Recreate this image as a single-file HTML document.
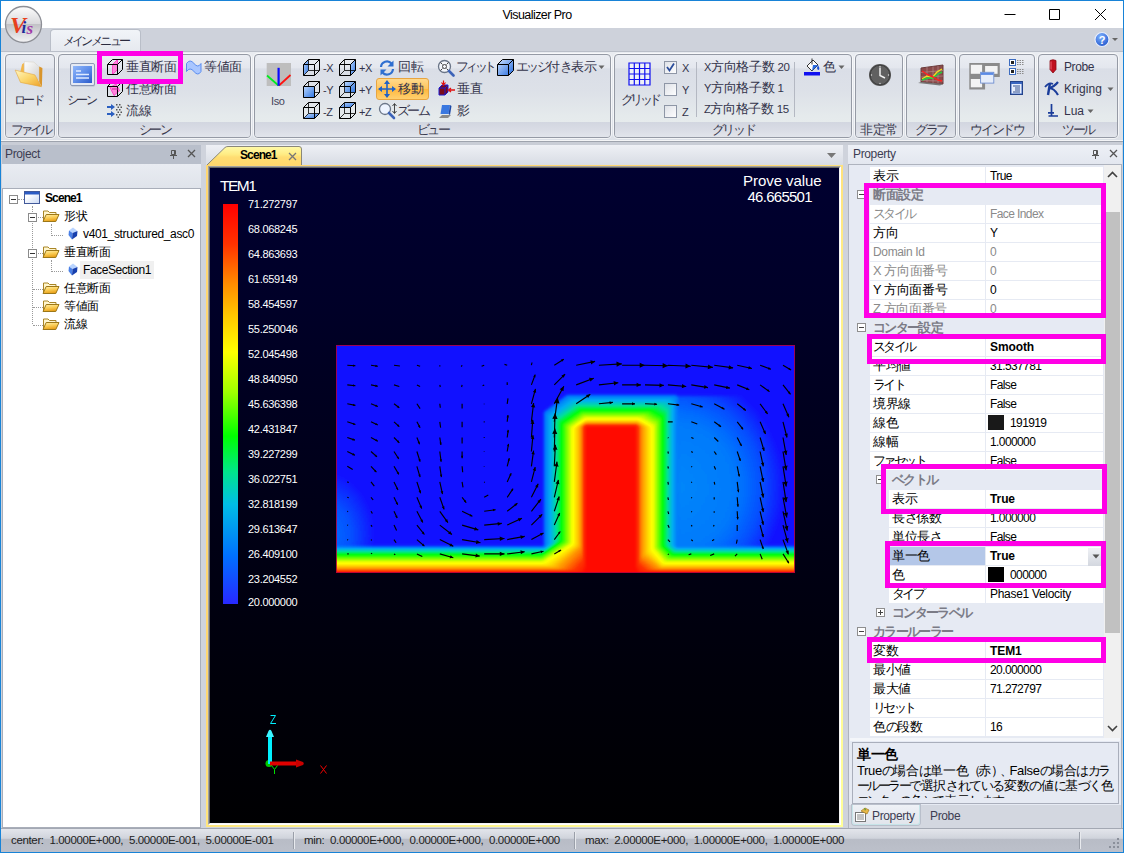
<!DOCTYPE html>
<html lang="ja">
<head>
<meta charset="utf-8">
<title>Visualizer Pro</title>
<style>
*{box-sizing:border-box;margin:0;padding:0}
html,body{width:1124px;height:853px;overflow:hidden;background:#fff}
body{font-family:"Liberation Sans",sans-serif;font-size:12px;color:#1e1e1e;position:relative;letter-spacing:-0.35px}
.abs{position:absolute}
#win{position:absolute;left:0;top:0;width:1124px;height:853px;background:#fff;overflow:hidden}
#winb{position:absolute;left:0;top:0;width:1124px;height:853px;border:1px solid #1883d7;z-index:99}
#title{position:absolute;left:0;top:0;width:1122px;height:28px;background:#fff}
#title .cap{position:absolute;left:0;width:1072px;top:7px;text-align:center;font-size:12.5px;color:#000;letter-spacing:-0.55px}
#tabband{position:absolute;left:0;top:28px;width:1122px;height:23px;background:#ced2db}
#maintab{position:absolute;left:49px;top:1px;width:91px;height:22px;background:linear-gradient(#f1f4f8,#e6e9ef);border:1px solid #b9bec8;border-bottom:none;border-radius:4px 4px 0 0;text-align:center;line-height:22px;font-size:12px;color:#2b2b3f}
#ribbon{position:absolute;left:0;top:51px;width:1122px;height:90px;background:linear-gradient(#e9ecf1,#dde1e8);border-top:1px solid #b9bec8;border-bottom:1px solid #f4f5f7}
.grp{position:absolute;top:3px;height:84px;border:1px solid #959aa5;border-radius:4px;background:linear-gradient(#eaedf3 0,#e4e7ee 15.5%,#dadee7 17%,#dde1e8 45%,#e5eaec 75%,#e9eeee 100%);overflow:hidden;box-shadow:0 0 0 1px rgba(255,255,255,.65)}
.grp .lbl{position:absolute;left:0;right:0;bottom:0;height:15px;background:linear-gradient(#d2d6e0,#d9dce5 50%,#e2e5eb);text-align:center;font-size:12.5px;line-height:17px;color:#3a3a4e}
.rt{position:absolute;font-size:12px;color:#33334a;white-space:nowrap;line-height:14px}
.sm{font-size:11px}
.k{letter-spacing:-2.6px}
.h{letter-spacing:-1.4px}
.p{letter-spacing:-3.5px}
.c .k{letter-spacing:-1.7px}
.lbl .k{letter-spacing:-2.4px}
.lbl.f .k{letter-spacing:-3.3px}
.kk .k{letter-spacing:-3.6px}
#gap1{position:absolute;left:0;top:141px;width:1122px;height:4px;background:#c9cdd6;border-top:1px solid #9ea3ad}
#work{position:absolute;left:0;top:145px;width:1122px;height:686px;background:#cfd3dc}
.mg{position:absolute;border:5px solid #ff00e6;z-index:50}
#status{position:absolute;left:0;top:828px;width:1122px;height:24px;background:linear-gradient(#e3e5eb 0,#d0d4dc 40%,#b8bcc6 46%,#bcc0ca 100%);border-top:1px solid #a3a8b3;font-size:11.5px;color:#222;line-height:22px}
#status span{position:absolute;top:0;white-space:pre}
.sep{position:absolute;top:3px;width:1px;height:17px;background:#9a9fa9;border-right:1px solid #e8eaee;width:2px}
</style>
</head>
<body>
<div id="win">
<div id="winb"></div>
<div id="title" style="left:1px;top:1px"><div class="cap">Visualizer Pro</div>
<svg class="abs" style="left:985px;top:0" width="138" height="28" viewBox="0 0 138 28"><path d="M18.5 13.5h11M63.5 8.5h10v10h-10zM109 8l11 11M120 8l-11 11" stroke="#000" stroke-width="1" fill="none"/></svg>
</div>
<div id="tabband" style="left:1px"><div id="maintab"><span class="k">メインメニュー</span></div>
<svg class="abs" style="left:1092px;top:2px" width="30" height="20" viewBox="0 0 30 20"><defs><radialGradient id="hg" cx="0.4" cy="0.3" r="0.8"><stop offset="0" stop-color="#7fb2ff"/><stop offset="1" stop-color="#1a4fc8"/></radialGradient></defs><circle cx="9" cy="9.5" r="7" fill="url(#hg)" stroke="#e8eefc" stroke-width="1.2"/><text x="9" y="14" font-family="Liberation Sans" font-weight="bold" font-size="11" fill="#fff" text-anchor="middle">?</text><path d="M19 8h6l-3 3z" fill="#666"/></svg>
</div>
<!-- app orb -->
<svg class="abs" style="left:3px;top:4px;z-index:5" width="42" height="42" viewBox="0 0 42 42"><defs><linearGradient id="og" x1="0" y1="0" x2="0" y2="1"><stop offset="0" stop-color="#fdfdfd"/><stop offset="0.48" stop-color="#d9d9dc"/><stop offset="0.5" stop-color="#c2c2c6"/><stop offset="1" stop-color="#f4f4f6"/></linearGradient></defs><circle cx="20.5" cy="20.5" r="18" fill="url(#og)" stroke="#8d8f96" stroke-width="1.3"/><text x="7" y="29" font-family="Liberation Serif" font-style="italic" font-weight="bold" font-size="24" fill="#e8401c">V</text><text x="18.5" y="29" font-family="Liberation Serif" font-style="italic" font-weight="bold" font-size="17" fill="#1a2a9a">i</text><text x="23.5" y="30" font-family="Liberation Serif" font-style="italic" font-weight="bold" font-size="17" fill="#a038a8">s</text></svg>
<div id="ribbon" style="left:1px">
</div>
<!-- groups (image coords) -->
<div class="grp" style="left:5px;top:54px;width:50px"><div class="lbl f"><span class="k">ファイル</span></div></div>
<div class="grp" style="left:58px;top:54px;width:193px"><div class="lbl"><span class="k">シーン</span></div></div>
<div class="grp" style="left:254px;top:54px;width:357px"><div class="lbl"><span class="k">ビュー</span></div></div>
<div class="grp" style="left:614px;top:54px;width:238px"><div class="lbl"><span class="k">グリッド</span></div></div>
<div class="grp" style="left:855px;top:54px;width:48px"><div class="lbl">非定常</div></div>
<div class="grp" style="left:906px;top:54px;width:50px"><div class="lbl"><span class="k">グラフ</span></div></div>
<div class="grp" style="left:959px;top:54px;width:76px"><div class="lbl"><span class="k">ウインドウ</span></div></div>
<div class="grp" style="left:1038px;top:54px;width:80px"><div class="lbl"><span class="k">ツール</span></div></div>
<div id="ribitems">
<!-- file -->
<svg class="abs" style="left:14px;top:58px" width="34" height="32" viewBox="0 0 34 32"><defs><linearGradient id="lf1" x1="0" y1="0" x2="1" y2="1"><stop offset="0" stop-color="#fff6c0"/><stop offset="0.5" stop-color="#fbd56a"/><stop offset="1" stop-color="#eda02a"/></linearGradient><linearGradient id="lf2" x1="0" y1="0" x2="1" y2="1"><stop offset="0" stop-color="#ffffff"/><stop offset="1" stop-color="#cfcfcf"/></linearGradient></defs><path d="M8.100 6.300L10.300 4.700 10.300 19.600 6 15.300z" fill="#f2b64a"/><path d="M10.300 3.600L19.900 4.100 25.200 8.900 25.200 21.700 10.300 19.600z" fill="url(#lf2)" stroke="#d8d4c8" stroke-width=".6"/><path d="M25.200 8.400L28.400 10 27.900 28.700 25.200 24z" fill="#d9952c"/><path d="M1.200 12.100L20.900 16.900 27.400 28.700 6.500 24.400z" fill="url(#lf1)" stroke="#e2a43a" stroke-width=".6"/></svg>
<div class="rt" style="left:14px;top:93px"><span class="k">ロード</span></div>
<!-- scene -->
<svg class="abs" style="left:70px;top:63px" width="27" height="27" viewBox="0 0 27 27"><defs><linearGradient id="sc1" x1="0" y1="0" x2="1" y2="1"><stop offset="0" stop-color="#8fb6fa"/><stop offset="0.5" stop-color="#5f8eea"/><stop offset="1" stop-color="#2a58c8"/></linearGradient></defs><rect x="1" y="1.500" width="24" height="22" rx="1.500" fill="#8a97b0" opacity=".5"/><rect x="0.500" y="0.500" width="24" height="22" rx="1.500" fill="#e4e9f4" stroke="#8e9ab4"/><rect x="3" y="3" width="19" height="17" fill="url(#sc1)"/><path d="M6 8h5M6 11.500h13M6 15h13" stroke="#dfeaff" stroke-width="1.600"/></svg>
<div class="rt" style="left:67px;top:93px"><span class="k">シーン</span></div>
<svg class="abs" style="left:106px;top:58px" width="18" height="18" viewBox="0 0 18 18"><path d="M6.500 16.500v-10l5-5v10z" fill="#ff86dc" stroke="#ff30c4" stroke-width=".8"/><path d="M1.500 6.500h10v10h-10zM1.500 6.500l5-5h10l-5 5M16.500 1.500v10l-5 5" stroke="#000" fill="none"/></svg>
<div class="rt" style="left:126px;top:60px;font-size:13px">垂直断面</div>
<svg class="abs" style="left:185px;top:59px" width="18" height="16" viewBox="0 0 18 16"><path d="M1.500 4.500q3.500-5 7.500 0t7 0v8q-3 5-7 0t-7.500 0z" fill="#a9c6ff" stroke="#5b8df0"/></svg>
<div class="rt" style="left:204px;top:60px;font-size:13px">等値面</div>
<svg class="abs" style="left:106px;top:80px" width="18" height="18" viewBox="0 0 18 18"><path d="M4 7.500l6-3.500 3.500 6.500-5.500 5z" fill="#ff86dc" stroke="#ff30c4" stroke-width=".8"/><path d="M1.500 6.500h10v10h-10zM1.500 6.500l5-5h10l-5 5M16.500 1.500v10l-5 5" stroke="#000" fill="none"/><path d="M6 9h6" stroke="#d020a0"/></svg>
<div class="rt" style="left:126px;top:82px;font-size:13px">任意断面</div>
<svg class="abs" style="left:106px;top:103px" width="18" height="16" viewBox="0 0 18 16"><path d="M1 4h5M1 11h5" stroke="#2b5fc0" stroke-width="2"/><path d="M5 1l4 3-4 3zM5 8l4 3-4 3z" fill="#2b5fc0"/><g fill="#555"><rect x="10" y="1" width="1.500" height="1.500"/><rect x="13" y="1" width="1.500" height="1.500"/><rect x="11.500" y="3.500" width="1.500" height="1.500"/><rect x="14.500" y="3.500" width="1.500" height="1.500"/><rect x="10" y="6" width="1.500" height="1.500"/><rect x="13" y="6" width="1.500" height="1.500"/><rect x="11.500" y="8.500" width="1.500" height="1.500"/><rect x="14.500" y="8.500" width="1.500" height="1.500"/><rect x="10" y="11" width="1.500" height="1.500"/><rect x="13" y="11" width="1.500" height="1.500"/><rect x="11.500" y="13.500" width="1.500" height="1.500"/></g></svg>
<div class="rt" style="left:126px;top:104px;font-size:13px">流線</div>
</div>
<div id="ribitems2">
<style>
.cube{position:absolute;width:20px;height:20px}
</style>
<!-- Iso -->
<svg class="abs" style="left:266px;top:62px" width="26" height="26" viewBox="0 0 26 26"><rect x="0.700" y="1" width="24.300" height="23" fill="#bebebe"/><path d="M12.500 23.500l-11.500-10" stroke="#00ee20" stroke-width="1.700"/><path d="M13 23.500l11.500-10.500" stroke="#ff1010" stroke-width="1.700"/><path d="M12.600 23.800v-18" stroke="#0808ff" stroke-width="2.200"/></svg>
<div class="rt sm" style="left:271px;top:94px;color:#44445a">Iso</div>
<svg class="abs" style="left:302px;top:58px" width="19" height="19" viewBox="0 0 19 19"><defs><linearGradient id="cb30258" x1="0" y1="0" x2="1" y2="1"><stop offset="0" stop-color="#bcd8ff"/><stop offset="1" stop-color="#2e74e0"/></linearGradient></defs><path d="M1.500 6.500l5-5v11l-5 5z" fill="url(#cb30258)"/><path d="M1.500 6.500h11v11h-11zM1.500 6.500l5-5h11l-5 5M17.500 1.500v11l-5 5" stroke="#000" fill="none"/><path d="M6.500 1.500v11l-5 5M6.500 12.500h11" stroke="#000" fill="none" stroke-width="0.800"/></svg>
<div class="rt sm" style="left:323px;top:61px">-X</div>
<svg class="abs" style="left:302px;top:80px" width="19" height="19" viewBox="0 0 19 19"><defs><linearGradient id="cb30280" x1="0" y1="0" x2="1" y2="1"><stop offset="0" stop-color="#bcd8ff"/><stop offset="1" stop-color="#2e74e0"/></linearGradient></defs><path d="M6.500 1.500v11l-5 5M6.500 12.500h11" stroke="#000" fill="none" stroke-width="0.800"/><path d="M1.500 6.500h11v11h-11z" fill="url(#cb30280)"/><path d="M1.500 6.500h11v11h-11zM1.500 6.500l5-5h11l-5 5M17.500 1.500v11l-5 5" stroke="#000" fill="none"/></svg>
<div class="rt sm" style="left:323px;top:83px">-Y</div>
<svg class="abs" style="left:302px;top:101px" width="19" height="19" viewBox="0 0 19 19"><defs><linearGradient id="cb302101" x1="0" y1="0" x2="1" y2="1"><stop offset="0" stop-color="#bcd8ff"/><stop offset="1" stop-color="#2e74e0"/></linearGradient></defs><path d="M1.500 17.500l5-5h11l-5 5z" fill="url(#cb302101)"/><path d="M1.500 6.500h11v11h-11zM1.500 6.500l5-5h11l-5 5M17.500 1.500v11l-5 5" stroke="#000" fill="none"/><path d="M6.500 1.500v11l-5 5M6.500 12.500h11" stroke="#000" fill="none" stroke-width="0.800"/></svg>
<div class="rt sm" style="left:323px;top:105px">-Z</div>
<svg class="abs" style="left:338px;top:58px" width="19" height="19" viewBox="0 0 19 19"><defs><linearGradient id="cb33858" x1="0" y1="0" x2="1" y2="1"><stop offset="0" stop-color="#bcd8ff"/><stop offset="1" stop-color="#2e74e0"/></linearGradient></defs><path d="M12.500 6.500l5-5v11l-5 5z" fill="url(#cb33858)"/><path d="M1.500 6.500h11v11h-11zM1.500 6.500l5-5h11l-5 5M17.500 1.500v11l-5 5" stroke="#000" fill="none"/><path d="M6.500 1.500v11l-5 5M6.500 12.500h11" stroke="#000" fill="none" stroke-width="0.800"/></svg>
<div class="rt sm" style="left:359px;top:61px">+X</div>
<svg class="abs" style="left:338px;top:80px" width="19" height="19" viewBox="0 0 19 19"><defs><linearGradient id="cb33880" x1="0" y1="0" x2="1" y2="1"><stop offset="0" stop-color="#bcd8ff"/><stop offset="1" stop-color="#2e74e0"/></linearGradient></defs><path d="M6.500 1.500h11v11h-11z" fill="url(#cb33880)"/><path d="M1.500 6.500h11v11h-11zM1.500 6.500l5-5h11l-5 5M17.500 1.500v11l-5 5" stroke="#000" fill="none"/><path d="M6.500 1.500v11l-5 5M6.500 12.500h11" stroke="#000" fill="none" stroke-width="0.800"/></svg>
<div class="rt sm" style="left:359px;top:83px">+Y</div>
<svg class="abs" style="left:338px;top:101px" width="19" height="19" viewBox="0 0 19 19"><defs><linearGradient id="cb338101" x1="0" y1="0" x2="1" y2="1"><stop offset="0" stop-color="#bcd8ff"/><stop offset="1" stop-color="#2e74e0"/></linearGradient></defs><path d="M1.500 6.500l5-5h11l-5 5z" fill="url(#cb338101)"/><path d="M1.500 6.500h11v11h-11zM1.500 6.500l5-5h11l-5 5M17.500 1.500v11l-5 5" stroke="#000" fill="none"/><path d="M6.500 1.500v11l-5 5M6.500 12.500h11" stroke="#000" fill="none" stroke-width="0.800"/></svg>
<div class="rt sm" style="left:359px;top:105px">+Z</div>
<svg class="abs" style="left:378px;top:59px" width="18" height="18" viewBox="0 0 18 18"><path d="M3 8a6 6 0 0 1 10.500-3.500" stroke="#2f6fd0" stroke-width="2.200" fill="none"/><path d="M15.500 1.500v6h-6z" fill="#2f6fd0"/><path d="M15 10a6 6 0 0 1-10.500 3.500" stroke="#2f6fd0" stroke-width="2.200" fill="none"/><path d="M2.500 16.500v-6h6z" fill="#2f6fd0"/></svg>
<div class="rt" style="left:398px;top:60px;font-size:13px">回転</div>
<div class="abs" style="left:376px;top:78px;width:53px;height:22px;border:1px solid #e8a540;border-radius:3px;background:linear-gradient(#ffd98c,#ffc45c 50%,#ffb83e 51%,#ffd070)"></div>
<svg class="abs" style="left:378px;top:80px" width="18" height="18" viewBox="0 0 18 18"><path d="M9 1.500v15M1.500 9h15" stroke="#1f62c8" stroke-width="1.600"/><path d="M9 0l3 4h-6zM9 18l3-4h-6zM0 9l4-3v6zM18 9l-4-3v6z" fill="#1f62c8"/></svg>
<div class="rt" style="left:398px;top:82px;font-size:13px">移動</div>
<svg class="abs" style="left:378px;top:102px" width="20" height="18" viewBox="0 0 20 18"><circle cx="7" cy="7" r="5.500" fill="#eef4ff" stroke="#6b7688" stroke-width="1.300"/><path d="M11 11l5 5" stroke="#3c63b8" stroke-width="2.600" stroke-linecap="round"/><path d="M16.500 2v9M14.500 4l2-2.500 2 2.500M14.500 9l2 2.500 2-2.500" stroke="#333" fill="none" stroke-width="0.900"/></svg>
<div class="rt" style="left:397px;top:104px;font-size:13px"><span class="k">ズーム</span></div>
<svg class="abs" style="left:437px;top:59px" width="18" height="18" viewBox="0 0 18 18"><circle cx="7.500" cy="7.500" r="6" fill="#f4f7fc" stroke="#6b7688" stroke-width="1.300"/><circle cx="7.500" cy="7.500" r="2" fill="none" stroke="#444"/><path d="M3.500 3.500l2 2M11.500 3.500l-2 2M3.500 11.500l2-2M11.500 11.500l-2-2" stroke="#444" stroke-width="1"/><path d="M12 12l4.500 4.500" stroke="#3c63b8" stroke-width="2.600" stroke-linecap="round"/></svg>
<div class="rt kk" style="left:456px;top:60px;font-size:13px"><span class="k">フィット</span></div>
<svg class="abs" style="left:437px;top:80px" width="20" height="18" viewBox="0 0 20 18"><path d="M2 8l3-3h6v7l-3 3h-6z" fill="#7a0a1a" stroke="#1a1ad0" stroke-width="1"/><path d="M2 8h6v7M8 8l3-3" stroke="#1a1ad0" fill="none"/><path d="M18 10h-6M14 8l-2.500 2 2.500 2" stroke="#e01010" stroke-width="1.300" fill="none"/><path d="M6.500 0.500v4M4.500 2.500l2 2.500 2-2.500" stroke="#e01010" stroke-width="1.200" fill="none"/></svg>
<div class="rt" style="left:457px;top:82px;font-size:13px">垂直</div>
<svg class="abs" style="left:438px;top:103px" width="16" height="16" viewBox="0 0 16 16"><path d="M1 15l3-3h9l-3 3z" fill="#8a8a8a"/><path d="M4 2h8l-1.500 9h-8z" fill="#3a78e0"/><path d="M12 2l1.500 1-1.500 9-1.500-1z" fill="#1c49a8"/></svg>
<div class="rt" style="left:457px;top:104px;font-size:13px">影</div>
<svg class="abs" style="left:496px;top:58px" width="19" height="19" viewBox="0 0 19 19"><defs><linearGradient id="ce" x1="0" y1="0" x2="1" y2="1"><stop offset="0" stop-color="#cfe4ff"/><stop offset="1" stop-color="#1f66dc"/></linearGradient></defs><path d="M1.500 6.500l5-5h11v11l-5 5h-11z" fill="url(#ce)"/><path d="M1.500 6.500h11v11h-11zM1.500 6.500l5-5h11l-5 5M17.500 1.500v11l-5 5" stroke="#000" fill="none"/></svg>
<div class="rt" style="left:516px;top:60px;font-size:12.5px;letter-spacing:-0.6px"><span class="k">エッジ</span>付<span class="h">き</span>表示</div>
<svg class="abs" style="left:598px;top:65px" width="7" height="5" viewBox="0 0 7 5"><path d="M0.500 0.500h6l-3 3.500z" fill="#666"/></svg>
<svg class="abs" style="left:628px;top:62px" width="24" height="24" viewBox="0 0 24 24"><rect x="1" y="1" width="21" height="22" fill="#eef0f6"/><path d="M1 1h21v22h-21zM1 6.500h21M1 12h21M1 17.500h21M6.300 1v22M11.500 1v22M16.800 1v22" stroke="#1010f0" stroke-width="1.200" fill="none"/></svg>
<div class="rt kk" style="left:621px;top:93px;font-size:12.5px"><span class="k">グリッド</span></div>
<div class="abs" style="left:664px;top:61px;width:13px;height:13px;border:1px solid #8e96a6;background:linear-gradient(135deg,#dfe2e8,#fdfdfe)"></div><svg class="abs" style="left:665px;top:62px" width="11" height="11" viewBox="0 0 11 11"><path d="M2 5l2.500 3.500 4.500-7" stroke="#2b4d9b" stroke-width="1.800" fill="none"/></svg><div class="rt sm" style="left:682px;top:61px">X</div>
<div class="abs" style="left:664px;top:83px;width:13px;height:13px;border:1px solid #8e96a6;background:linear-gradient(135deg,#dfe2e8,#fdfdfe)"></div><div class="rt sm" style="left:682px;top:83px">Y</div>
<div class="abs" style="left:664px;top:105px;width:13px;height:13px;border:1px solid #8e96a6;background:linear-gradient(135deg,#dfe2e8,#fdfdfe)"></div><div class="rt sm" style="left:682px;top:105px">Z</div>
<div class="abs" style="left:696px;top:62px;width:1px;height:55px;background:#b4b8c2"></div>
<div class="abs" style="left:794px;top:62px;width:1px;height:55px;background:#b4b8c2"></div>
<div class="rt" style="left:704px;top:60px;font-size:12.500px"><span style="font-size:11px">X</span>方向格子数 <span style="font-size:11.500px">20</span></div>
<div class="rt" style="left:704px;top:81px;font-size:12.500px"><span style="font-size:11px">Y</span>方向格子数 <span style="font-size:11.500px">1</span></div>
<div class="rt" style="left:704px;top:102px;font-size:12.500px"><span style="font-size:11px">Z</span>方向格子数 <span style="font-size:11.500px">15</span></div>
<svg class="abs" style="left:803px;top:57px" width="18" height="20" viewBox="0 0 18 20"><path d="M4 9l6-6 5 5-6 6z" fill="#fff" stroke="#333" stroke-width="1"/><path d="M9 1.500v6" stroke="#333"/><path d="M15 8q2 3 1 5-2 0-2-2z" fill="#1a4fd0"/><path d="M10 8l5 0-6 6z" fill="#2a6be0"/><rect x="1" y="15" width="16" height="3.500" fill="#1010f0"/></svg>
<div class="rt" style="left:823px;top:60px;font-size:13px">色</div>
<svg class="abs" style="left:838px;top:65px" width="7" height="5" viewBox="0 0 7 5"><path d="M0.500 0.500h6l-3 3.500z" fill="#666"/></svg>
<svg class="abs" style="left:868px;top:63px" width="24" height="24" viewBox="0 0 24 24"><circle cx="12" cy="12" r="11" fill="#555"/><circle cx="12" cy="12" r="9.800" fill="#606060" stroke="#3e3e3e"/><path d="M12 4.500v8l5 2.500" stroke="#f0f0f0" stroke-width="1.500" fill="none"/><g fill="#ddd"><circle cx="12" cy="3.500" r=".7"/><circle cx="12" cy="20.500" r=".7"/><circle cx="3.500" cy="12" r=".7"/><circle cx="20.500" cy="12" r=".7"/></g></svg>
<svg class="abs" style="left:917px;top:64px" width="28" height="22" viewBox="0 0 28 22"><path d="M4 4l22-3v19l-22-2z" fill="#8a4a4a"/><path d="M4 4l22-3v19l-22-2z" fill="none" stroke="#6a3a3a"/><path d="M4 8.500l22-2M4 13l22-1M4 16.500l22 0.500M10 3v15.500M16 2.500v16.500M21 1.800v17.700" stroke="#b89090" stroke-width=".6"/><path d="M5 15l5-3 5 2 5-6 5-3" stroke="#f0e020" stroke-width="1.400" fill="none"/><path d="M5 16l6-2 5 0 5-4 4-2" stroke="#20d040" stroke-width="1.400" fill="none"/><path d="M5 7l6 4 5 2 5 3 4 1" stroke="#ff2020" stroke-width="1.400" fill="none"/><path d="M1 19l3-1 22 2-3 1.500z" fill="#777"/></svg>
<svg class="abs" style="left:968px;top:63px" width="34" height="30" viewBox="0 0 34 30"><path d="M1.300 0h30.500v14h-14.700v12.600h-15.800z" fill="#8b8b8b"/><rect x="2.800" y="1.800" width="11.300" height="9" fill="#f3f3f3"/><rect x="17.100" y="3" width="12.500" height="7.800" fill="#f3f3f3"/><rect x="2.800" y="16" width="11.300" height="8.300" fill="#f3f3f3"/><rect x="12.600" y="9.300" width="13.200" height="10.800" fill="#e6edfa" stroke="#6f8fd0" stroke-width=".9"/><rect x="13" y="9.700" width="12.400" height="2.200" fill="#5a8ae6"/></svg>
<svg class="abs" style="left:1008px;top:58px" width="17" height="19" viewBox="0 0 17 19"><g fill="#fff" stroke="#3c6cc0"><rect x="1.500" y="1.500" width="6" height="6"/><rect x="1.500" y="10.500" width="6" height="6"/></g><rect x="3" y="3" width="3" height="3" fill="#222"/><rect x="3" y="12" width="3" height="3" fill="#222"/><path d="M9 2.500h7M9 4.500h7M9 6.500h7M9 11.500h7M9 13.500h7M9 15.500h7" stroke="#8a8a8a" stroke-dasharray="1.500 1"/></svg>
<svg class="abs" style="left:1010px;top:81px" width="13" height="14" viewBox="0 0 13 14"><rect x="0.500" y="0.500" width="12" height="13" fill="#3a66c0" stroke="#24438a"/><rect x="1.500" y="3" width="10" height="9.500" fill="#e8eefc"/><path d="M3 5h7M5 7h5M5 9h5M3 11h7" stroke="#33508f"/></svg>
<svg class="abs" style="left:1047px;top:59px" width="12" height="16" viewBox="0 0 12 16"><path d="M3 1.500q3-1.500 6 0v9l-3 3.500-3-3.500z" fill="#c01020" stroke="#8a0a14" stroke-width=".8"/><path d="M4 2.500v8" stroke="#f06070"/></svg>
<div class="rt" style="left:1064px;top:60px;font-size:12px;letter-spacing:-.4px">Probe</div>
<svg class="abs" style="left:1044px;top:80px" width="17" height="17" viewBox="0 0 17 17"><path d="M6 3l-2 12" stroke="#1a3c9a" stroke-width="2.400"/><path d="M14 2q-4 5-9 6 5 0 9 7" stroke="#1a3c9a" stroke-width="2.200" fill="none"/><path d="M1 7q4-5 8-3" stroke="#1a3c9a" stroke-width="1.800" fill="none"/></svg>
<div class="rt" style="left:1064px;top:82px;font-size:12px;letter-spacing:.1px">Kriging</div>
<svg class="abs" style="left:1107px;top:87px" width="7" height="5" viewBox="0 0 7 5"><path d="M0.500 0.500h6l-3 3.500z" fill="#666"/></svg>
<svg class="abs" style="left:1047px;top:103px" width="12" height="15" viewBox="0 0 12 15"><path d="M4.500 1v12M1.500 13h9.500M1 9.800h6" stroke="#1a3c9a" stroke-width="1.700" fill="none"/></svg>
<div class="rt" style="left:1064px;top:104px;font-size:12px;letter-spacing:0px">Lua</div>
<svg class="abs" style="left:1087px;top:109px" width="7" height="5" viewBox="0 0 7 5"><path d="M0.500 0.500h6l-3 3.500z" fill="#666"/></svg>
</div>
<div id="gap1" style="left:1px"></div>
<div id="work" style="left:1px"></div>
<!-- Project panel -->
<div class="abs" style="left:2px;top:145px;width:199px;height:19px;background:#b9bfcb;font-size:12px;color:#3d3d52;line-height:18px;padding-left:3px">Project
<svg class="abs" style="left:166px;top:3px" width="30" height="12" viewBox="0 0 30 12"><path d="M3.500 2.500h4v4h-4zM2 7.500h7M5.500 7.500v3.500M6.500 2.500v4" stroke="#555" fill="none"/><path d="M20 2l7 7M27 2l-7 7" stroke="#555" stroke-width="1.3"/></svg>
</div>
<div class="abs" style="left:2px;top:164px;width:199px;height:25px;background:linear-gradient(#e9ecf2,#dfe3ea)"></div>
<div class="abs" style="left:2px;top:188px;width:199px;height:640px;background:#fff;border:1px solid #a9aeb9"></div>
<div id="tree" class="abs" style="left:0;top:0;font-size:12px;color:#000">
<style>
#tree .t{position:absolute;white-space:nowrap;line-height:16px;font-size:12px}
#tree .bx{position:absolute;width:9px;height:9px;border:1px solid #8b8b8b;background:#fff}
#tree .bx:after{content:"";position:absolute;left:1px;top:3px;width:5px;height:1px;background:#333}
#tree .dh{position:absolute;height:0;border-top:1px dotted #9a9a9a}
#tree .dv{position:absolute;width:0;border-left:1px dotted #9a9a9a}
</style>
<div class="bx" style="left:9px;top:195px"></div><div class="dh" style="left:18px;top:199px;width:6px"></div>
<svg class="abs" style="left:24px;top:191px" width="17" height="14" viewBox="0 0 17 14"><defs><linearGradient id="wg" x1="0" y1="0" x2="1" y2="1"><stop offset="0.3" stop-color="#fff"/><stop offset="1" stop-color="#c9d8f4"/></linearGradient></defs><rect x="0.500" y="0.500" width="15" height="12" fill="url(#wg)" stroke="#41599a"/><rect x="1" y="1" width="14" height="2.500" fill="#2c5cc5"/></svg>
<div class="t" style="left:45px;top:190px;font-weight:bold;letter-spacing:-0.9px">Scene1</div>
<div class="dv" style="left:32px;top:206px;height:118px"></div>
<div class="bx" style="left:28px;top:213px"></div><div class="dh" style="left:38px;top:217px;width:5px"></div>
<div class="t" style="left:64px;top:208px">形状</div>
<div class="dv" style="left:51px;top:224px;height:10px"></div><div class="dh" style="left:51px;top:235px;width:12px"></div>
<div class="t" style="left:83px;top:226px">v401_structured_asc0</div>
<div class="bx" style="left:28px;top:249px"></div><div class="dh" style="left:38px;top:253px;width:5px"></div>
<div class="t" style="left:64px;top:244px">垂直断面</div>
<div class="dv" style="left:51px;top:260px;height:10px"></div><div class="dh" style="left:51px;top:271px;width:12px"></div>
<div class="abs" style="left:80px;top:261px;width:74px;height:18px;background:#f0f0f0"></div>
<div class="t" style="left:83px;top:262px;letter-spacing:-0.45px">FaceSection1</div>
<div class="dh" style="left:33px;top:289px;width:10px"></div>
<div class="t" style="left:64px;top:280px">任意断面</div>
<div class="dh" style="left:33px;top:307px;width:10px"></div>
<div class="t" style="left:64px;top:298px">等値面</div>
<div class="dh" style="left:33px;top:325px;width:10px"></div>
<div class="t" style="left:64px;top:316px">流線</div>
</div>
<svg class="abs" style="left:42px;top:209px" width="18" height="14" viewBox="0 0 18 14"><defs><linearGradient id="fg209" x1="0" y1="0" x2="0.3" y2="1"><stop offset="0" stop-color="#fff0b0"/><stop offset="0.5" stop-color="#fbd05a"/><stop offset="1" stop-color="#e9a21c"/></linearGradient></defs><path d="M1.500 11.500v-9.500h4.500l1.500 1.500h6.500v2.500" fill="#fff6cf" stroke="#a98526"/><path d="M1 12.500l3.200-7h12.800l-3.200 7z" fill="url(#fg209)" stroke="#9c7718"/></svg>
<svg class="abs" style="left:42px;top:245px" width="18" height="14" viewBox="0 0 18 14"><defs><linearGradient id="fg245" x1="0" y1="0" x2="0.3" y2="1"><stop offset="0" stop-color="#fff0b0"/><stop offset="0.5" stop-color="#fbd05a"/><stop offset="1" stop-color="#e9a21c"/></linearGradient></defs><path d="M1.500 11.500v-9.500h4.500l1.500 1.500h6.500v2.500" fill="#fff6cf" stroke="#a98526"/><path d="M1 12.500l3.200-7h12.800l-3.200 7z" fill="url(#fg245)" stroke="#9c7718"/></svg>
<svg class="abs" style="left:42px;top:281px" width="18" height="14" viewBox="0 0 18 14"><defs><linearGradient id="fg281" x1="0" y1="0" x2="0.3" y2="1"><stop offset="0" stop-color="#fff0b0"/><stop offset="0.5" stop-color="#fbd05a"/><stop offset="1" stop-color="#e9a21c"/></linearGradient></defs><path d="M1.500 11.500v-9.500h4.500l1.500 1.500h6.500v2.500" fill="#fff6cf" stroke="#a98526"/><path d="M1 12.500l3.200-7h12.800l-3.200 7z" fill="url(#fg281)" stroke="#9c7718"/></svg>
<svg class="abs" style="left:42px;top:299px" width="18" height="14" viewBox="0 0 18 14"><defs><linearGradient id="fg299" x1="0" y1="0" x2="0.3" y2="1"><stop offset="0" stop-color="#fff0b0"/><stop offset="0.5" stop-color="#fbd05a"/><stop offset="1" stop-color="#e9a21c"/></linearGradient></defs><path d="M1.500 11.500v-9.500h4.500l1.500 1.500h6.500v2.500" fill="#fff6cf" stroke="#a98526"/><path d="M1 12.500l3.200-7h12.800l-3.200 7z" fill="url(#fg299)" stroke="#9c7718"/></svg>
<svg class="abs" style="left:42px;top:317px" width="18" height="14" viewBox="0 0 18 14"><defs><linearGradient id="fg317" x1="0" y1="0" x2="0.3" y2="1"><stop offset="0" stop-color="#fff0b0"/><stop offset="0.5" stop-color="#fbd05a"/><stop offset="1" stop-color="#e9a21c"/></linearGradient></defs><path d="M1.500 11.500v-9.500h4.500l1.500 1.500h6.500v2.500" fill="#fff6cf" stroke="#a98526"/><path d="M1 12.500l3.200-7h12.800l-3.200 7z" fill="url(#fg317)" stroke="#9c7718"/></svg>
<svg class="abs" style="left:67px;top:227px" width="12" height="13" viewBox="0 0 12 13"><path d="M6 0.500L2 3.500 5.500 6 10.500 4z" fill="#b9d4ff"/><path d="M2 3.500L1.500 8 5 12.500 5.500 6z" fill="#4a80e6"/><path d="M5.500 6L10.500 4 10 9 5 12.500z" fill="#173fae"/></svg>
<svg class="abs" style="left:67px;top:263px" width="12" height="13" viewBox="0 0 12 13"><path d="M6 0.500L2 3.500 5.500 6 10.500 4z" fill="#b9d4ff"/><path d="M2 3.500L1.500 8 5 12.500 5.500 6z" fill="#4a80e6"/><path d="M5.500 6L10.500 4 10 9 5 12.500z" fill="#173fae"/></svg>
<!-- Scene tab strip -->
<div class="abs" style="left:206px;top:145px;width:637px;height:20px;background:linear-gradient(#eef0f5,#d8dce4)"></div>
<svg class="abs" style="left:206px;top:145px" width="100" height="21" viewBox="0 0 100 21"><defs><linearGradient id="tg" x1="0" y1="0" x2="0" y2="1"><stop offset="0" stop-color="#fffaa8"/><stop offset="0.4" stop-color="#ffec84"/><stop offset="0.55" stop-color="#ffdd72"/><stop offset="1" stop-color="#ffd56c"/></linearGradient></defs><path d="M0 21L2 19 19 2.500Q20 1.500 22 1.500H93Q95.500 1.500 95.500 4V21z" fill="url(#tg)" stroke="#8a8778" stroke-width="1"/><path d="M83 8l7 7M90 8l-7 7" stroke="#777" stroke-width="1.3"/></svg>
<div class="abs" style="left:240px;top:148px;font-weight:bold;font-size:12px;color:#000;line-height:14px;letter-spacing:-0.9px">Scene1</div>
<svg class="abs" style="left:826px;top:152px" width="12" height="8" viewBox="0 0 12 8"><path d="M1 1h9l-4.500 5z" fill="#777"/></svg>
<!-- viewport frame -->
<div class="abs" style="left:206px;top:165px;width:637px;height:662px;background:linear-gradient(135deg,#ffd771 0%,#ffd771 42%,#fff088 58%,#ffff99 100%)"></div>
<div class="abs" style="left:208px;top:166px;width:633px;height:659px;border:1px solid #fff;border-left-color:#a0a0a0;border-top-color:#a0a0a0"></div>
<div class="abs" style="left:209px;top:167px;width:631px;height:657px;border:1px solid #f4f4f4;border-left-color:#696969;border-top-color:#696969"></div>
<div id="vp" class="abs" style="left:210px;top:168px;width:629px;height:655px;background:linear-gradient(#000030 0%,#000028 20%,#000018 50%,#00000a 78%,#000002 100%)"></div>
<div class="abs" style="left:220px;top:177px;font-size:15.5px;color:#fff;line-height:18px;letter-spacing:-1.5px">TEM1</div>
<div class="abs" style="left:223px;top:204px;width:15px;height:400px;background:linear-gradient(to top,#2828ff 0%,#0070ff 12%,#00bee6 25%,#00e68c 33%,#00ff00 42%,#a0ff00 53%,#ffff00 63%,#ffc800 72%,#ff8c00 80%,#ff3200 90%,#ff0000 100%)"></div>
<div id="cbl" class="abs" style="left:248px;top:0;font-size:11px;color:#fff;line-height:12px;letter-spacing:-0.3px">
<div class="abs" style="left:0;top:198px">71.272797</div>
<div class="abs" style="left:0;top:223px">68.068245</div>
<div class="abs" style="left:0;top:248px">64.863693</div>
<div class="abs" style="left:0;top:273px">61.659149</div>
<div class="abs" style="left:0;top:298px">58.454597</div>
<div class="abs" style="left:0;top:323px">55.250046</div>
<div class="abs" style="left:0;top:348px">52.045498</div>
<div class="abs" style="left:0;top:373px">48.840950</div>
<div class="abs" style="left:0;top:398px">45.636398</div>
<div class="abs" style="left:0;top:423px">42.431847</div>
<div class="abs" style="left:0;top:448px">39.227299</div>
<div class="abs" style="left:0;top:473px">36.022751</div>
<div class="abs" style="left:0;top:498px">32.818199</div>
<div class="abs" style="left:0;top:523px">29.613647</div>
<div class="abs" style="left:0;top:548px">26.409100</div>
<div class="abs" style="left:0;top:573px">23.204552</div>
<div class="abs" style="left:0;top:596px">20.000000</div>
</div>
<svg class="abs" style="left:336px;top:345px" width="459" height="228" viewBox="0 0 459 228">
<defs>
<filter id="cm" x="0" y="0" width="100%" height="100%" color-interpolation-filters="sRGB">
<feGaussianBlur stdDeviation="1.6"/>
<feComponentTransfer>
<feFuncR type="table" tableValues="0.070 0.056 0.042 0.028 0.014 0.000 0.000 0.000 0.000 0.000 0.000 0.000 0.000 0.000 0.000 0.000 0.000 0.000 0.000 0.000 0.000 0.090 0.180 0.270 0.360 0.450 0.544 0.638 0.732 0.826 0.920 0.960 1.000 1.000 1.000 1.000 1.000 1.000 1.000 1.000 1.000 1.000 1.000 1.000 1.000 1.000 1.000 1.000 1.000 1.000 1.000"/>
<feFuncG type="table" tableValues="0.070 0.140 0.210 0.280 0.350 0.420 0.472 0.524 0.576 0.628 0.680 0.720 0.760 0.800 0.840 0.880 0.904 0.928 0.952 0.976 1.000 1.000 1.000 1.000 1.000 1.000 1.000 1.000 1.000 1.000 1.000 1.000 1.000 0.950 0.900 0.850 0.790 0.730 0.670 0.610 0.550 0.480 0.410 0.340 0.270 0.200 0.168 0.136 0.104 0.072 0.040"/>
<feFuncB type="table" tableValues="1.000 1.000 1.000 1.000 1.000 1.000 0.990 0.980 0.970 0.960 0.950 0.880 0.810 0.740 0.670 0.600 0.490 0.380 0.270 0.160 0.050 0.040 0.030 0.020 0.010 0.000 0.000 0.000 0.000 0.000 0.000 0.000 0.000 0.000 0.000 0.000 0.000 0.000 0.000 0.000 0.000 0.000 0.000 0.000 0.000 0.000 0.000 0.000 0.000 0.000 0.000"/>
<feFuncA type="linear" slope="0" intercept="1"/>
</feComponentTransfer>
</filter>
<radialGradient id="rg1" cx="0" cy="0" r="1" gradientUnits="userSpaceOnUse" gradientTransform="translate(340 142) scale(108 116)"><stop offset="0" stop-color="#242424"/><stop offset="0.55" stop-color="#1f1f1f"/><stop offset="0.8" stop-color="#111"/><stop offset="1" stop-color="#000"/></radialGradient><clipPath id="cp2"><rect x="300" y="51" width="170" height="190"/></clipPath>
<radialGradient id="rg2" cx="0" cy="0" r="1" gradientUnits="userSpaceOnUse" gradientTransform="translate(-8 190) scale(46 62)"><stop offset="0" stop-color="#1b1b1b"/><stop offset="0.5" stop-color="#121212"/><stop offset="1" stop-color="#000"/></radialGradient>
<clipPath id="cp"><rect x="0" y="0" width="459" height="228"/></clipPath>
</defs>
<g clip-path="url(#cp)"><g filter="url(#cm)">
<rect x="-10" y="-10" width="479" height="248" fill="#000"/>
<ellipse cx="340" cy="142" rx="108" ry="116" fill="url(#rg1)" clip-path="url(#cp2)"/>
<ellipse cx="-8" cy="190" rx="46" ry="62" fill="url(#rg2)"/>
<polygon fill="#1f1f1f" points="208.0,201.5 208.0,201.5 208.0,67.0 231.0,50.0 340.0,50.0 342.0,52.0 342.0,201.5 342.0,201.5 464.0,201.5 464.0,233.0 -5.0,233.0 -5.0,201.5"/>
<polygon fill="#242424" points="208.2,202.0 209.5,201.0 209.5,67.9 232.3,51.3 338.1,51.3 340.8,53.6 340.8,201.4 341.6,202.0 464.0,202.0 464.0,233.0 -5.0,233.0 -5.0,202.0"/>
<polygon fill="#292929" points="208.3,202.5 210.9,200.6 210.9,68.9 233.6,52.6 336.2,52.6 339.5,55.2 339.5,201.2 341.2,202.5 464.0,202.5 464.0,233.0 -5.0,233.0 -5.0,202.5"/>
<polygon fill="#2f2f2f" points="208.5,203.0 212.4,200.1 212.4,69.8 234.9,53.8 334.4,53.8 338.3,56.8 338.3,201.1 340.8,203.0 464.0,203.0 464.0,233.0 -5.0,233.0 -5.0,203.0"/>
<polygon fill="#343434" points="208.7,203.5 213.9,199.6 213.9,70.8 236.2,55.1 332.5,55.1 337.1,58.4 337.1,200.9 340.4,203.5 464.0,203.5 464.0,233.0 -5.0,233.0 -5.0,203.5"/>
<polygon fill="#3a3a3a" points="208.8,204.0 215.4,199.1 215.4,71.7 237.5,56.4 330.6,56.4 335.9,60.0 335.9,200.8 340.0,204.0 464.0,204.0 464.0,233.0 -5.0,233.0 -5.0,204.0"/>
<polygon fill="#3f3f3f" points="209.0,204.5 216.8,198.7 216.8,72.7 238.8,57.7 328.7,57.7 334.6,61.6 334.6,200.6 339.5,204.5 464.0,204.5 464.0,233.0 -5.0,233.0 -5.0,204.5"/>
<polygon fill="#454545" points="208.6,205.2 218.0,198.3 218.0,73.4 239.7,58.7 327.0,58.7 333.6,63.0 333.6,200.6 339.2,205.2 464.0,205.2 464.0,233.0 -5.0,233.0 -5.0,205.2"/>
<polygon fill="#4a4a4a" points="208.1,205.9 219.1,198.0 219.1,74.2 240.4,59.6 325.2,59.6 332.6,64.3 332.6,200.7 338.8,205.9 464.0,205.9 464.0,233.0 -5.0,233.0 -5.0,205.9"/>
<polygon fill="#4f4f4f" points="207.6,206.5 220.2,197.7 220.2,74.9 241.2,60.6 323.5,60.6 331.6,65.7 331.6,200.7 338.4,206.5 464.0,206.5 464.0,233.0 -5.0,233.0 -5.0,206.5"/>
<polygon fill="#555555" points="207.1,207.2 221.4,197.3 221.4,75.6 241.9,61.6 321.7,61.6 330.6,67.0 330.6,200.8 338.0,207.2 464.0,207.2 464.0,233.0 -5.0,233.0 -5.0,207.2"/>
<polygon fill="#5a5a5a" points="206.6,207.9 222.5,197.0 222.5,76.3 242.7,62.6 320.0,62.6 329.6,68.4 329.6,200.8 337.7,207.9 464.0,207.9 464.0,233.0 -5.0,233.0 -5.0,207.9"/>
<polygon fill="#606060" points="206.1,208.6 223.6,196.7 223.6,77.1 243.4,63.5 318.2,63.5 328.6,69.7 328.6,200.9 337.3,208.6 464.0,208.6 464.0,233.0 -5.0,233.0 -5.0,208.6"/>
<polygon fill="#656565" points="205.6,209.2 224.7,196.4 224.7,77.8 244.2,64.5 316.5,64.5 327.6,71.1 327.6,200.9 336.9,209.2 464.0,209.2 464.0,233.0 -5.0,233.0 -5.0,209.2"/>
<polygon fill="#6a6a6a" points="205.1,209.9 225.9,196.0 225.9,78.5 244.9,65.5 314.7,65.5 326.6,72.4 326.6,201.0 336.5,209.9 464.0,209.9 464.0,233.0 -5.0,233.0 -5.0,209.9"/>
<polygon fill="#707070" points="205.1,210.7 226.9,196.3 226.9,79.0 245.4,66.3 313.5,66.3 325.6,73.4 325.6,201.3 335.7,210.7 464.0,210.7 464.0,233.0 -5.0,233.0 -5.0,210.7"/>
<polygon fill="#757575" points="205.3,211.5 227.9,196.5 227.9,79.4 245.9,67.1 312.3,67.1 324.7,74.3 324.7,201.5 334.9,211.5 464.0,211.5 464.0,233.0 -5.0,233.0 -5.0,211.5"/>
<polygon fill="#7b7b7b" points="205.5,212.2 229.0,196.8 229.0,79.8 246.3,67.9 311.2,67.9 323.7,75.2 323.7,201.8 334.0,212.2 464.0,212.2 464.0,233.0 -5.0,233.0 -5.0,212.2"/>
<polygon fill="#808080" points="205.6,213.0 230.0,197.1 230.0,80.3 246.8,68.8 310.0,68.8 322.8,76.1 322.8,202.1 333.1,213.0 464.0,213.0 464.0,233.0 -5.0,233.0 -5.0,213.0"/>
<polygon fill="#868686" points="205.8,213.8 231.0,197.4 231.0,80.7 247.2,69.6 308.8,69.6 321.8,77.0 321.8,202.4 332.3,213.8 464.0,213.8 464.0,233.0 -5.0,233.0 -5.0,213.8"/>
<polygon fill="#8b8b8b" points="206.0,214.5 232.1,197.7 232.1,81.1 247.7,70.4 307.7,70.4 320.8,77.9 320.8,202.7 331.4,214.5 464.0,214.5 464.0,233.0 -5.0,233.0 -5.0,214.5"/>
<polygon fill="#909090" points="206.1,215.3 233.1,198.0 233.1,81.5 248.1,71.2 306.5,71.2 319.9,78.8 319.9,203.0 330.5,215.3 464.0,215.3 464.0,233.0 -5.0,233.0 -5.0,215.3"/>
<polygon fill="#969696" points="206.3,216.1 234.1,198.3 234.1,82.0 248.6,72.0 305.4,72.0 318.9,79.8 318.9,203.3 329.6,216.1 464.0,216.1 464.0,233.0 -5.0,233.0 -5.0,216.1"/>
<polygon fill="#9b9b9b" points="206.5,216.9 235.2,198.6 235.2,82.4 249.0,72.8 304.2,72.8 317.9,80.7 317.9,203.6 328.8,216.9 464.0,216.9 464.0,233.0 -5.0,233.0 -5.0,216.9"/>
<polygon fill="#a1a1a1" points="206.6,217.6 236.2,198.9 236.2,82.8 249.5,73.6 303.0,73.6 317.0,81.6 317.0,203.9 327.9,217.6 464.0,217.6 464.0,233.0 -5.0,233.0 -5.0,217.6"/>
<polygon fill="#a6a6a6" points="207.8,218.4 237.3,199.2 237.3,82.9 249.7,74.3 302.4,74.3 315.8,82.0 315.8,204.5 327.3,218.4 464.0,218.4 464.0,233.0 -5.0,233.0 -5.0,218.4"/>
<polygon fill="#ababab" points="210.0,219.2 238.4,199.6 238.4,82.7 249.8,74.9 302.2,74.9 314.4,81.9 314.4,205.4 326.8,219.2 464.0,219.2 464.0,233.0 -5.0,233.0 -5.0,219.2"/>
<polygon fill="#b1b1b1" points="212.2,220.0 239.5,200.0 239.5,82.4 249.8,75.4 302.0,75.4 313.0,81.8 313.0,206.3 326.3,220.0 464.0,220.0 464.0,233.0 -5.0,233.0 -5.0,220.0"/>
<polygon fill="#b6b6b6" points="214.3,220.8 240.6,200.4 240.6,82.2 249.8,76.0 301.8,76.0 311.6,81.7 311.6,207.2 325.9,220.8 464.0,220.8 464.0,233.0 -5.0,233.0 -5.0,220.8"/>
<polygon fill="#bcbcbc" points="216.5,221.5 241.7,200.7 241.7,82.0 249.9,76.6 301.6,76.6 310.2,81.6 310.2,208.2 325.4,221.5 464.0,221.5 464.0,233.0 -5.0,233.0 -5.0,221.5"/>
<polygon fill="#c1c1c1" points="218.7,222.3 242.8,201.1 242.8,81.8 249.9,77.2 301.4,77.2 308.8,81.5 308.8,209.1 324.9,222.3 464.0,222.3 464.0,233.0 -5.0,233.0 -5.0,222.3"/>
<polygon fill="#c7c7c7" points="220.8,223.1 243.9,201.5 243.9,81.5 250.0,77.7 301.2,77.7 307.4,81.4 307.4,210.0 324.5,223.1 464.0,223.1 464.0,233.0 -5.0,233.0 -5.0,223.1"/>
<polygon fill="#cccccc" points="223.0,223.9 245.0,201.9 245.0,81.3 250.0,78.3 301.0,78.3 306.0,81.3 306.0,210.9 324.0,223.9 464.0,223.9 464.0,233.0 -5.0,233.0 -5.0,223.9"/>
<polygon fill="#d1d1d1" points="225.9,224.4 245.6,204.5 245.6,81.3 249.9,78.7 300.9,78.7 305.2,81.3 305.2,212.4 321.4,224.4 464.0,224.4 464.0,233.0 -5.0,233.0 -5.0,224.4"/>
<polygon fill="#d7d7d7" points="228.9,224.8 246.1,207.0 246.1,81.3 249.9,79.1 300.8,79.1 304.5,81.3 304.5,213.8 318.8,224.8 464.0,224.8 464.0,233.0 -5.0,233.0 -5.0,224.8"/>
<polygon fill="#dcdcdc" points="231.8,225.2 246.7,209.6 246.7,81.3 249.8,79.4 300.6,79.4 303.8,81.3 303.8,215.2 316.1,225.2 464.0,225.2 464.0,233.0 -5.0,233.0 -5.0,225.2"/>
<polygon fill="#e2e2e2" points="234.8,225.7 247.2,212.2 247.2,81.3 249.8,79.8 300.5,79.8 303.0,81.3 303.0,216.7 313.5,225.7 464.0,225.7 464.0,233.0 -5.0,233.0 -5.0,225.7"/>
<polygon fill="#e7e7e7" points="237.7,226.1 247.8,214.8 247.8,81.3 249.7,80.2 300.4,80.2 302.2,81.3 302.2,218.1 310.9,226.1 464.0,226.1 464.0,233.0 -5.0,233.0 -5.0,226.1"/>
<polygon fill="#ededed" points="240.6,226.6 248.4,217.4 248.4,81.3 249.6,80.6 300.2,80.6 301.5,81.3 301.5,219.6 308.2,226.6 464.0,226.6 464.0,233.0 -5.0,233.0 -5.0,226.6"/>
<polygon fill="#f2f2f2" points="243.6,227.0 248.9,219.9 248.9,81.3 249.6,80.9 300.1,80.9 300.8,81.3 300.8,221.0 305.6,227.0 464.0,227.0 464.0,233.0 -5.0,233.0 -5.0,227.0"/>
<polygon fill="#ffffff" points="246.5,227.5 249.5,222.5 249.5,81.3 249.5,81.3 300.0,81.3 300.0,81.3 300.0,222.5 303.0,227.5 464.0,227.5 464.0,233.0 -5.0,233.0 -5.0,227.5"/>
</g></g>
<rect x="0.5" y="0.5" width="458" height="227" fill="none" stroke="#b4003c" stroke-opacity="0.85"/>
<path d="M11.3 20.2L19.4 20.8M11.3 39.9L19.4 40.7M11.3 58.8L19.4 60.4M11.3 76.8L19.4 79.5M11.3 92.5L18.9 95.1M11.3 106.5L18.9 110.2M11.3 121.3L16.7 124.5M11.3 136.9L12.7 137.5M11.3 152.3L12.7 152.8M11.3 166.3L12.1 166.6M11.3 180.1L12.1 180.3M11.3 194.6L12.1 194.9M11.3 208.9L12.7 208.9M35.0 20.2L41.8 21.3M35.0 39.9L41.8 41.2M35.0 58.8L41.8 61.5M35.0 76.8L41.8 80.1M35.0 92.5L41.8 96.2M35.0 106.5L41.0 111.9M35.0 121.3L40.4 127.2M35.0 136.9L38.3 141.2M35.0 152.3L37.2 155.0M35.0 166.3L36.4 168.5M35.0 180.1L36.1 181.7M35.0 194.6L35.8 195.4M35.0 208.9L36.1 208.1M58.0 20.2L63.9 21.0M58.0 39.9L63.3 41.5M58.0 58.8L63.3 62.8M58.0 76.8L63.3 81.7M58.0 92.5L63.3 97.8M58.0 106.5L62.8 114.0M58.0 121.3L62.8 129.4M58.0 136.9L62.0 145.0M58.0 152.3L61.7 159.8M58.0 166.3L61.2 173.0M58.0 180.1L60.6 185.4M58.0 194.6L60.1 197.8M58.0 208.9L59.3 209.7M80.9 20.2L84.1 21.3M80.9 39.9L84.1 41.5M80.9 58.8L84.1 63.6M80.9 76.8L84.1 82.7M80.9 92.5L83.6 99.2M80.9 106.5L84.1 116.7M80.9 121.3L84.1 132.1M80.9 136.9L84.6 148.2M80.9 152.3L85.7 163.6M80.9 166.3L86.8 177.6M80.9 180.1L88.4 189.5M80.9 194.6L88.4 201.1M80.9 208.9L86.3 211.6M103.8 20.2L103.8 21.6M103.8 39.9L104.3 42.0M103.8 58.8L104.3 62.8M103.8 76.8L104.6 82.7M103.8 92.5L104.9 100.0M103.8 106.5L105.1 116.7M103.8 121.3L105.4 132.1M103.8 136.9L106.5 149.1M103.8 152.3L108.1 164.4M103.8 166.3L111.9 177.6M103.8 180.1L115.9 189.5M103.8 194.6L117.3 201.3M103.8 208.9L117.3 212.7M126.1 20.2L125.3 21.6M126.1 39.9L125.6 42.0M126.1 58.8L126.1 63.6M126.1 76.8L126.1 82.2M126.1 92.5L126.1 98.4M126.1 106.5L126.1 113.2M126.1 121.3L126.7 127.2M126.1 136.9L127.0 142.3M126.1 152.3L130.2 157.7M126.1 166.3L136.4 171.2M126.1 180.1L142.3 184.9M126.1 194.6L144.5 197.8M126.1 208.9L143.7 211.1M148.2 20.2L145.6 21.3M148.2 39.9L146.6 40.7M148.2 58.8L148.2 59.3M147.7 76.8h1M147.7 92.5h1M148.2 106.5L148.2 107.0M148.2 121.3L148.2 121.8M148.2 136.9L148.8 137.5M148.2 152.3L152.3 150.1M148.2 166.3L159.6 164.7M148.2 180.1L165.8 178.4M148.2 194.6L168.5 193.5M148.2 208.9L168.5 208.9M171.2 20.2L168.5 19.4M171.2 39.9L171.2 37.2M171.2 58.8L172.0 53.4M171.2 76.8L172.0 70.1M171.2 92.5L172.2 84.9M171.2 106.5L172.5 98.9M171.2 121.3L173.3 113.2M171.2 136.9L175.2 128.3M171.2 152.3L177.1 143.7M171.2 166.3L181.4 158.2M171.2 180.1L186.0 173.3M171.2 194.6L188.7 191.4M171.2 208.9L188.7 206.7M195.4 20.2L196.0 17.5M195.4 39.9L199.2 29.6M195.4 58.8L199.5 43.9M195.4 76.8L197.6 58.0M195.4 92.5L196.8 74.9M195.4 106.5L197.0 90.3M195.4 121.3L197.6 105.7M195.4 136.9L199.2 122.1M195.4 152.3L202.2 138.8M195.4 166.3L204.9 154.2M195.4 180.1L206.2 169.3M195.4 194.6L207.5 187.9M195.4 208.9L207.5 206.2M218.3 20.2L227.8 14.3M218.3 39.9L229.1 29.1M218.3 58.8L227.8 41.2M218.3 76.8L221.6 52.6M218.3 92.5L219.1 68.2M218.3 106.5L218.9 83.6M218.3 121.3L219.4 99.7M218.3 136.9L221.0 116.7M218.3 152.3L222.4 134.8M218.3 166.3L223.2 151.5M218.3 180.1L223.7 167.9M218.3 194.6L224.3 186.5M218.3 208.9L225.1 204.9M240.2 20.2L259.1 16.4M240.2 39.9L257.8 33.2M240.2 58.8L254.3 49.3M262.9 20.2L285.8 18.9M262.9 39.9L282.3 37.7M262.9 58.8L276.9 57.4M286.1 20.2L309.0 20.2M286.1 39.9L304.9 39.9M286.1 58.8L299.0 58.8M309.0 20.2L331.9 20.8M309.0 39.9L327.8 40.4M309.0 58.8L321.1 59.3M331.9 20.2L354.8 21.3M331.9 39.9L350.2 41.5M331.9 58.8L343.2 60.1M331.9 76.8L336.7 76.8M331.9 92.5L332.4 93.0M331.9 106.5L332.4 108.6M331.9 121.3L332.4 123.5M331.9 136.9L332.4 139.6M331.9 152.3L332.4 155.0M331.9 166.3L332.7 169.0M331.9 180.1L333.2 182.7M331.9 194.6L334.0 196.8M331.9 208.9L332.7 209.7M355.3 20.2L376.9 22.4M355.3 39.9L372.0 42.6M355.3 58.8L366.7 62.0M355.3 76.8L361.3 79.0M355.3 92.5L357.5 93.5M355.3 106.5L356.7 107.5M355.3 121.3L356.1 122.1M355.3 136.9L355.9 137.7M355.3 152.3L355.9 153.1M355.3 166.3L355.9 167.1M355.3 180.1L356.1 181.4M355.3 194.6L356.7 196.0M355.3 208.9L352.6 209.7M378.2 20.2L397.1 22.9M378.2 39.9L393.9 43.1M378.2 58.8L388.5 64.2M378.2 76.8L385.0 81.7M378.2 92.5L382.3 96.5M378.2 106.5L380.4 109.7M378.2 121.3L379.6 124.5M378.2 136.9L378.8 139.6M378.2 152.3L378.2 154.4M378.2 166.3L378.2 167.7M378.2 180.1L377.4 181.4M378.2 194.6L376.1 195.7M378.2 208.9L374.2 210.5M401.2 20.2L416.0 23.5M401.2 39.9L413.3 44.7M401.2 58.8L409.8 65.5M401.2 76.8L407.1 84.4M401.2 92.5L405.5 101.1M401.2 106.5L404.4 115.9M401.2 121.3L403.3 131.5M401.2 136.9L402.5 147.2M401.2 152.3L402.0 161.7M401.2 166.3L401.7 174.4M401.2 180.1L401.2 186.0M401.2 194.6L400.4 198.7M401.2 208.9L399.0 211.1M424.1 20.2L434.9 24.3M424.1 39.9L433.5 46.6M424.1 58.8L431.6 69.0M424.1 76.8L429.5 88.9M424.1 92.5L428.1 105.9M424.1 106.5L427.3 121.3M424.1 121.3L427.3 136.9M424.1 136.9L427.3 152.6M424.1 152.3L427.3 167.1M424.1 166.3L427.3 179.8M424.1 180.1L427.3 192.2M424.1 194.6L427.3 204.0M424.1 208.9L426.2 214.3M447.0 20.2L455.1 25.1M447.0 39.9L454.5 49.3M447.0 58.8L452.9 72.2M447.0 76.8L451.0 92.5M447.0 92.5L450.2 110.0M447.0 106.5L450.2 125.3M447.0 121.3L450.2 141.5M447.0 136.9L450.2 157.1M447.0 152.3L450.8 172.5M447.0 166.3L451.3 185.7M447.0 180.1L451.8 197.6M447.0 194.6L452.4 209.4M447.0 208.9L452.9 218.3" stroke="#000" stroke-width="1.15" fill="none"/>
<path d="M19.4 20.8L16.9 21.7L17.1 19.4ZM19.4 40.7L16.9 41.6L17.1 39.3ZM19.4 60.4L16.8 61.0L17.3 58.8ZM19.4 79.5L16.8 79.8L17.5 77.7ZM18.9 95.1L16.2 95.4L17.0 93.3ZM18.9 110.2L16.2 110.2L17.2 108.1ZM41.8 21.3L39.2 22.1L39.6 19.8ZM41.8 41.2L39.2 41.9L39.7 39.6ZM41.8 61.5L39.1 61.6L40.0 59.5ZM41.8 80.1L39.1 80.1L40.1 78.0ZM41.8 96.2L39.1 96.1L40.2 94.0ZM41.0 111.9L38.4 111.1L40.0 109.4ZM40.4 127.2L38.0 126.2L39.7 124.7ZM63.3 62.8L60.7 62.3L62.1 60.4ZM63.3 81.7L60.8 80.9L62.3 79.2ZM63.3 97.8L60.8 97.0L62.5 95.3ZM62.8 114.0L60.5 112.6L62.5 111.4ZM62.8 129.4L60.6 127.9L62.6 126.7ZM62.0 145.0L59.9 143.4L62.0 142.4ZM61.7 159.8L59.6 158.2L61.7 157.2ZM61.2 173.0L59.1 171.4L61.2 170.4ZM84.1 82.7L81.9 81.2L84.0 80.1ZM83.6 99.2L81.6 97.4L83.7 96.5ZM84.1 116.7L82.2 114.7L84.5 114.0ZM84.1 132.1L82.2 130.0L84.5 129.2ZM84.6 148.2L82.5 146.1L85.0 145.2ZM85.7 163.6L83.3 161.5L85.8 160.5ZM86.8 177.6L84.2 175.7L86.7 174.4ZM88.4 189.5L85.6 188.2L87.7 186.5ZM88.4 201.1L85.8 200.4L87.3 198.6ZM104.9 100.0L103.4 97.8L105.7 97.5ZM105.1 116.7L103.7 114.5L106.0 114.2ZM105.4 132.1L103.8 129.8L106.2 129.4ZM106.5 149.1L104.5 146.6L107.2 146.0ZM108.1 164.4L105.8 162.1L108.4 161.2ZM111.9 177.6L108.8 175.9L111.2 174.1ZM115.9 189.5L112.1 188.7L114.2 186.0ZM117.3 201.3L113.4 201.3L114.9 198.3ZM117.3 212.7L113.7 213.3L114.6 210.3ZM126.1 113.2L125.0 110.8L127.3 110.8ZM130.2 157.7L127.8 156.5L129.7 155.1ZM136.4 171.2L133.5 171.2L134.6 168.9ZM142.3 184.9L138.1 185.6L139.1 182.0ZM144.5 197.8L139.9 199.1L140.6 195.1ZM143.7 211.1L139.4 212.5L139.9 208.6ZM159.6 164.7L157.1 166.3L156.8 163.8ZM165.8 178.4L161.9 180.7L161.6 176.9ZM168.5 193.5L163.9 196.0L163.7 191.5ZM168.5 208.9L163.8 211.1L163.8 206.7ZM172.0 70.1L172.8 72.6L170.5 72.3ZM172.2 84.9L173.0 87.4L170.8 87.1ZM172.5 98.9L173.2 101.5L171.0 101.1ZM173.3 113.2L173.8 115.8L171.6 115.2ZM175.2 128.3L175.2 131.0L173.1 130.0ZM177.1 143.7L176.7 146.3L174.8 145.0ZM181.4 158.2L179.9 161.2L178.2 159.0ZM186.0 173.3L183.3 176.5L181.8 173.2ZM188.7 191.4L185.0 194.1L184.3 190.2ZM188.7 206.7L184.9 209.2L184.4 205.3ZM199.2 29.6L199.5 32.4L197.2 31.6ZM199.5 43.9L200.2 47.8L196.9 46.9ZM197.6 58.0L199.2 62.5L195.0 62.1ZM196.8 74.9L198.4 79.1L194.5 78.8ZM197.0 90.3L198.4 94.2L194.9 93.8ZM197.6 105.7L198.8 109.5L195.4 109.0ZM199.2 122.1L200.0 125.9L196.7 125.1ZM202.2 138.8L202.1 142.7L199.1 141.2ZM204.9 154.2L204.0 158.0L201.3 155.9ZM206.2 169.3L204.9 172.9L202.5 170.6ZM207.5 187.9L205.5 190.8L204.0 188.1ZM207.5 206.2L205.1 208.2L204.5 205.5ZM227.8 14.3L226.2 16.7L224.9 14.6ZM229.1 29.1L227.8 32.8L225.4 30.4ZM227.8 41.2L227.5 46.3L223.7 44.2ZM221.6 52.6L223.5 58.5L218.2 57.8ZM219.1 68.2L221.6 73.9L216.3 73.7ZM218.9 83.6L221.3 88.9L216.2 88.8ZM219.4 99.7L221.5 104.8L216.8 104.6ZM221.0 116.7L222.6 121.7L218.2 121.1ZM222.4 134.8L223.4 139.2L219.5 138.4ZM223.2 151.5L223.7 155.4L220.4 154.4ZM223.7 167.9L223.8 171.3L221.1 170.1ZM224.3 186.5L223.8 189.1L221.9 187.8ZM225.1 204.9L223.6 207.1L222.4 205.1ZM259.1 16.4L255.2 19.4L254.4 15.2ZM257.8 33.2L254.5 36.6L253.0 32.8ZM254.3 49.3L252.1 53.0L250.0 49.9ZM285.8 18.9L280.7 21.7L280.4 16.6ZM282.3 37.7L278.1 40.4L277.6 36.1ZM276.9 57.4L273.8 59.3L273.5 56.2ZM309.0 20.2L303.7 22.7L303.7 17.7ZM304.9 39.9L300.6 42.0L300.6 37.8ZM299.0 58.8L296.0 60.2L296.0 57.3ZM331.9 20.8L326.6 23.2L326.7 18.1ZM327.8 40.4L323.4 42.4L323.6 38.2ZM321.1 59.3L318.3 60.5L318.4 57.8ZM354.8 21.3L349.4 23.6L349.6 18.5ZM350.2 41.5L345.8 43.2L346.2 39.1ZM343.2 60.1L340.5 61.0L340.8 58.5ZM376.9 22.4L371.7 24.3L372.2 19.5ZM372.0 42.6L367.9 43.8L368.5 40.1ZM366.7 62.0L363.7 62.5L364.4 60.0ZM397.1 22.9L392.5 24.4L393.1 20.2ZM393.9 43.1L389.9 44.1L390.6 40.7ZM388.5 64.2L385.5 64.0L386.7 61.8ZM385.0 81.7L382.4 81.2L383.7 79.3ZM416.0 23.5L412.2 24.3L412.9 21.1ZM413.3 44.7L410.0 45.0L411.0 42.3ZM409.8 65.5L407.1 64.9L408.5 63.0ZM407.1 84.4L404.7 83.2L406.5 81.8ZM405.5 101.1L403.4 99.4L405.4 98.4ZM404.4 115.9L402.5 114.0L404.7 113.3ZM403.3 131.5L401.7 129.4L404.0 128.9ZM402.5 147.2L401.1 144.9L403.3 144.6ZM402.0 161.7L400.6 159.4L402.9 159.2ZM401.7 174.4L400.4 172.1L402.7 171.9ZM434.9 24.3L431.9 24.5L432.8 22.1ZM433.5 46.6L430.6 46.1L432.1 44.0ZM431.6 69.0L428.8 67.5L431.0 65.8ZM429.5 88.9L426.9 86.8L429.6 85.6ZM428.1 105.9L425.7 103.3L428.7 102.4ZM427.3 121.3L424.9 118.2L428.2 117.5ZM427.3 136.9L424.8 133.7L428.3 133.0ZM427.3 152.6L424.8 149.3L428.3 148.6ZM427.3 167.1L424.9 164.1L428.2 163.3ZM427.3 179.8L425.1 177.0L428.0 176.3ZM427.3 192.2L425.2 189.8L427.9 189.0ZM427.3 204.0L425.4 202.1L427.6 201.4ZM455.1 25.1L452.4 24.8L453.6 22.8ZM454.5 49.3L451.8 48.0L453.8 46.3ZM452.9 72.2L450.1 69.8L453.0 68.5ZM451.0 92.5L448.4 89.3L451.8 88.4ZM450.2 110.0L447.5 106.3L451.4 105.6ZM450.2 125.3L447.4 121.4L451.6 120.6ZM450.2 141.5L447.2 137.2L451.7 136.5ZM450.2 157.1L447.2 152.9L451.7 152.1ZM450.8 172.5L447.7 168.3L452.1 167.4ZM451.3 185.7L448.2 181.7L452.4 180.8ZM451.8 197.6L448.8 194.1L452.7 193.0ZM452.4 209.4L449.5 206.6L452.8 205.4ZM452.9 218.3L450.5 216.8L452.6 215.5Z" fill="#000"/>
</svg>
<div class="abs" style="left:743px;top:173px;font-size:15px;color:#fff;line-height:16px;white-space:pre;letter-spacing:-0.05px">Prove value
<span style="letter-spacing:-0.73px;margin-left:4.5px">46.665501</span></div>
<!-- axes triad -->
<svg class="abs" style="left:255px;top:710px" width="80" height="70" viewBox="0 0 80 70"><circle cx="14" cy="53.500" r="3.500" fill="#00c800"/><rect x="13" y="27" width="4" height="27" fill="#00f0ff"/><path d="M11 27h8l-2.500-6q-1.500-2.500-3 0z" fill="#3cf4ff"/><rect x="15" y="51.500" width="27" height="4" fill="#e00000"/><path d="M41 49.500v8l7-2.500q1.500-1.500 0-3z" fill="#c80000"/><path d="M15.500 5.500h5l-5 8h5.500" stroke="#00f0ff" fill="none"/><path d="M65.500 55.500l6 8M71.500 55.500l-6 8" stroke="#f00000" fill="none"/><path d="M16.500 55.500l3 4 3-4M19.500 59.500v4.500" stroke="#00e000" fill="none"/></svg>
<!-- Property panel -->
<div class="abs" style="left:848px;top:145px;width:274px;height:19px;background:linear-gradient(#edf0f6,#e3e7ef);font-size:12px;color:#3d3d52;line-height:18px;padding-left:5px">Property
<svg class="abs" style="left:242px;top:3px" width="30" height="12" viewBox="0 0 30 12"><path d="M3.500 2.500h4v4h-4zM2 7.500h7M5.500 7.500v3.500M6.500 2.500v4" stroke="#555" fill="none"/><path d="M20 2l7 7M27 2l-7 7" stroke="#555" stroke-width="1.3"/></svg>
</div>
<div class="abs" style="left:848px;top:164px;width:274px;height:664px;background:#e6eaf3;border:1px solid #aeb3be"></div>
<style>
#pg .n,#pg .v,#pg .c{position:absolute;height:19px;line-height:18px;font-size:12px;white-space:nowrap;overflow:hidden}
#pg .n{font-size:12.8px;background:#fff;border-bottom:1px solid #e6eaf3;border-right:1px solid #e6eaf3;padding-left:3px}
#pg .v{background:#fff;border-bottom:1px solid #e6eaf3;padding-left:4px;left:986px;width:117px;letter-spacing:-0.6px}
#pg .v.b{letter-spacing:-0.1px}
#pg .c{color:#7b7b86;font-weight:bold;font-size:13px;padding-left:3px;background:#e6eaf3}
#pg .g{color:#8a8a8a}
#pg .b{font-weight:bold}
#pg .pm{position:absolute;width:9px;height:9px;border:1px solid #8e8e8e;background:#fff}
#pg .pm:after{content:"";position:absolute;left:1px;top:3px;width:5px;height:1px;background:#444}
#pg .pl:before{content:"";position:absolute;left:3px;top:1px;width:1px;height:5px;background:#444}
#pg .sw{display:inline-block;width:16px;height:15px;vertical-align:-3px;margin-right:6px;margin-left:-2px}
</style>
<div id="pg" class="abs" style="left:0;top:0;color:#000">
<div class="n" style="left:870px;top:167px;width:116px">表示</div><div class="v" style="top:167px">True</div>
<div class="pm" style="left:857px;top:190px"></div><div class="c" style="left:870px;top:186px;width:234px">断面設定</div>
<div class="n g" style="left:870px;top:205px;width:116px"><span class="k">スタイル</span></div><div class="v g" style="top:205px">Face Index</div>
<div class="n" style="left:870px;top:224px;width:116px">方向</div><div class="v" style="top:224px">Y</div>
<div class="n g" style="left:870px;top:243px;width:116px"><span style="font-size:12px">Domain Id</span></div><div class="v g" style="top:243px">0</div>
<div class="n g" style="left:870px;top:262px;width:116px">X 方向面番号</div><div class="v g" style="top:262px">0</div>
<div class="n" style="left:870px;top:281px;width:116px">Y 方向面番号</div><div class="v" style="top:281px">0</div>
<div class="n g" style="left:870px;top:300px;width:116px">Z 方向面番号</div><div class="v g" style="top:300px">0</div>
<div class="pm" style="left:857px;top:323px"></div><div class="c" style="left:870px;top:319px;width:234px"><span class="k">コンター</span>設定</div>
<div class="n" style="left:870px;top:338px;width:116px"><span class="k">スタイル</span></div><div class="v b" style="top:338px">Smooth</div>
<div class="n" style="left:870px;top:357px;width:116px">平均値</div><div class="v" style="top:357px">31.537781</div>
<div class="n" style="left:870px;top:376px;width:116px"><span class="k">ライト</span></div><div class="v" style="top:376px">False</div>
<div class="n" style="left:870px;top:395px;width:116px">境界線</div><div class="v" style="top:395px">False</div>
<div class="n" style="left:870px;top:414px;width:116px">線色</div><div class="v" style="top:414px"><span class="sw" style="background:#191919"></span>191919</div>
<div class="n" style="left:870px;top:433px;width:116px">線幅</div><div class="v" style="top:433px">1.000000</div>
<div class="n" style="left:870px;top:452px;width:116px"><span class="k">ファセット</span></div><div class="v" style="top:452px">False</div>
<div class="pm" style="left:876px;top:475px"></div><div class="c" style="left:889px;top:471px;width:215px"><span class="k">ベクトル</span></div>
<div class="n" style="left:889px;top:490px;width:97px">表示</div><div class="v b" style="top:490px">True</div>
<div class="n" style="left:889px;top:509px;width:97px">長<span class="h">さ</span>係数</div><div class="v" style="top:509px">1.000000</div>
<div class="n" style="left:889px;top:528px;width:97px">単位長<span class="h">さ</span></div><div class="v" style="top:528px">False</div>
<div class="n" style="left:889px;top:547px;width:97px;background:#b4c7e8">単一色</div><div class="v b" style="top:547px">True</div>
<div class="n" style="left:889px;top:566px;width:97px">色</div><div class="v" style="top:566px"><span class="sw" style="background:#000"></span>000000</div>
<div class="n" style="left:889px;top:585px;width:97px"><span class="k">タイプ</span></div><div class="v" style="top:585px"><span style="letter-spacing:-0.3px">Phase1 Velocity</span></div>
<div class="pm pl" style="left:876px;top:608px"></div><div class="c" style="left:889px;top:604px;width:215px"><span class="k">コンターラベル</span></div>
<div class="pm" style="left:857px;top:627px"></div><div class="c" style="left:870px;top:623px;width:234px"><span class="k">カラールーラー</span></div>
<div class="n" style="left:870px;top:642px;width:116px">変数</div><div class="v b" style="top:642px">TEM1</div>
<div class="n" style="left:870px;top:661px;width:116px">最小値</div><div class="v" style="top:661px">20.000000</div>
<div class="n" style="left:870px;top:680px;width:116px">最大値</div><div class="v" style="top:680px">71.272797</div>
<div class="n" style="left:870px;top:699px;width:116px"><span class="k">リセット</span></div><div class="v" style="top:699px"></div>
<div class="n" style="left:870px;top:718px;width:116px">色<span class="h">の</span>段数</div><div class="v" style="top:718px">16</div>
<div class="abs" style="left:1088px;top:548px;width:16px;height:18px;background:linear-gradient(#eff1f5,#d3d7df)"></div>
<svg class="abs" style="left:1092px;top:554px" width="8" height="5" viewBox="0 0 8 5"><path d="M0.500 0.500h7l-3.500 4z" fill="#555"/></svg>
</div>
<!-- scrollbar -->
<div class="abs" style="left:1104px;top:165px;width:17px;height:573px;background:#f0f0f0"></div>
<div class="abs" style="left:1105px;top:212px;width:15px;height:421px;background:#c1c1c1"></div>
<svg class="abs" style="left:1107px;top:171px" width="11" height="7" viewBox="0 0 11 7"><path d="M1 6l4.500-4.500 4.500 4.500" stroke="#404040" stroke-width="1.600" fill="none"/></svg>
<svg class="abs" style="left:1107px;top:725px" width="11" height="7" viewBox="0 0 11 7"><path d="M1 1l4.500 4.500 4.500-4.500" stroke="#404040" stroke-width="1.600" fill="none"/></svg>
<!-- description -->
<div class="abs" style="left:850px;top:738px;width:270px;height:3px;background:#f4f6fa"></div>
<div class="abs" style="left:852px;top:742px;width:267px;height:62px;border:1px solid #a9aebb;background:#e6eaf3"><div class="abs" style="left:0;top:0;width:265px;height:55px;overflow:hidden;padding:3px 4px;font-size:13px;line-height:15px;color:#000;white-space:nowrap"><div style="font-weight:bold;font-size:13.5px;line-height:17px">単一色</div>True<span class="h">の</span>場合<span class="h">は</span>単一色<span class="p">（</span>赤<span class="p">）、</span>False<span class="h">の</span>場合<span class="h">は</span><span class="k">カラ</span><br><span class="k">ールーラー</span><span class="h">で</span>選択<span class="h">されている</span>変数<span class="h">の</span>値<span class="h">に</span>基<span class="h">づく</span>色<span class="p">（</span><br><span class="k">コンター</span><span class="h">の</span>色<span class="p">）</span><span class="h">で</span>表示<span class="h">します</span></div></div>
<!-- bottom tabs -->
<div class="abs" style="left:849px;top:805px;width:272px;height:23px;background:#d3d7e0"></div>
<div class="abs" style="left:852px;top:805px;width:68px;height:20px;background:linear-gradient(#eef1f6,#e1e5ec);border:1px solid #c6e4e8;border-top:none;border-radius:0 0 3px 3px;box-shadow:0 0 0 1px #b9bfcb"></div>
<svg class="abs" style="left:854px;top:807px" width="16" height="16" viewBox="0 0 16 16"><rect x="1.500" y="5.500" width="10" height="9" fill="#fff" stroke="#777"/><path d="M3 8h7M3 10h7M3 12h7" stroke="#888"/><path d="M7 4l4-3 4 2-2 4z" fill="#e8b84a" stroke="#a57a1a" stroke-width=".7"/><path d="M10 1l2 1-1 2" fill="#4a9a3a"/></svg>
<div class="abs" style="left:872px;top:809px;font-size:12px;color:#3d3d52;line-height:14px">Property</div>
<div class="abs" style="left:930px;top:809px;font-size:12px;color:#3d3d52;line-height:14px">Probe</div>
<!-- magenta annotation boxes -->
<div class="mg" style="left:97px;top:51px;width:86px;height:33px"></div>
<div class="mg" style="left:864px;top:183px;width:242px;height:135px"></div>
<div class="mg" style="left:867px;top:334px;width:239px;height:30px"></div>
<div class="mg" style="left:881px;top:464px;width:226px;height:50px"></div>
<div class="mg" style="left:885px;top:541px;width:221px;height:47px"></div>
<div class="mg" style="left:867px;top:637px;width:239px;height:26px"></div>
<!-- status bar -->
<div id="status" style="left:1px"><span style="left:10px">center:  1.00000E+000,  5.00000E-001,  5.00000E-001</span><div class="sep" style="left:292px"></div><span style="left:303px">min:  0.00000E+000,  0.00000E+000,  0.00000E+000</span><div class="sep" style="left:573px"></div><span style="left:584px">max:  2.00000E+000,  1.00000E+000,  1.00000E+000</span><div class="sep" style="left:1078px"></div>
<svg class="abs" style="left:1106px;top:8px" width="14" height="13" viewBox="0 0 14 13"><g fill="#8b909b"><rect x="10" y="1" width="2" height="2"/><rect x="6" y="5" width="2" height="2"/><rect x="10" y="5" width="2" height="2"/><rect x="2" y="9" width="2" height="2"/><rect x="6" y="9" width="2" height="2"/><rect x="10" y="9" width="2" height="2"/></g></svg>
</div>
</div>
</body>
</html>
